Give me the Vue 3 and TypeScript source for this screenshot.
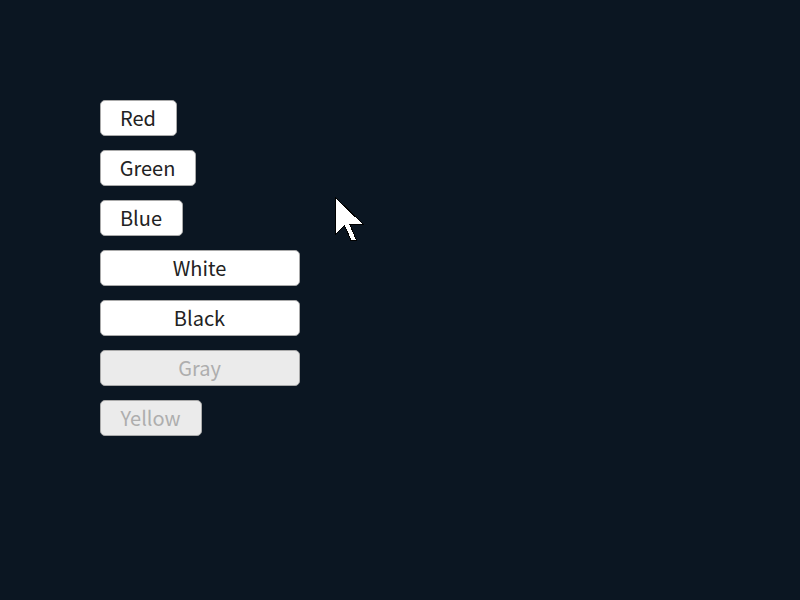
<script setup lang="ts">
interface Item { label: string; size: string; disabled: boolean }
const items: Item[] = [
  { label: 'Red', size: 'red', disabled: false },
  { label: 'Green', size: 'green', disabled: false },
  { label: 'Blue', size: 'blue', disabled: false },
  { label: 'White', size: 'wide', disabled: false },
  { label: 'Black', size: 'wide', disabled: false },
  { label: 'Gray', size: 'wide', disabled: true },
  { label: 'Yellow', size: 'yellow', disabled: true },
]
</script>

<template>
  <main class="screen">
    <button v-for="item in items" :key="item.label" class="button" :class="item.size" :disabled="item.disabled">{{ item.label }}</button>
    <svg class="cursor" viewBox="0 0 34 50" aria-hidden="true">
      <path d="M3.5 3.5V40.5L12.5 31.5L19 46.5H24.5L18 30.5H31.5Z" fill="#fff" stroke="#000" shape-rendering="crispEdges" />
    </svg>
  </main>
</template>

<style>
body { margin: 0; background: #0b1622; }
</style>
<style scoped>
.screen { position: relative; box-sizing: border-box; width: 800px; height: 600px; padding: 100px; display: flex; flex-direction: column; align-items: flex-start; gap: 14px; background: #0b1622; overflow: hidden; }
.button { box-sizing: border-box; height: 36px; flex: none; padding: 0 1px 0 0; border: 1px solid #aaa; border-radius: 5px; background: #fff; color: #222; font: 20px/34px "Noto Sans CJK SC", sans-serif; text-align: center; }
.button:disabled { background: #ebebeb; color: #aeaeae; }
.red { width: 77px; }
.green { width: 96px; }
.blue { width: 83px; }
.wide { width: 200px; }
.yellow { width: 102px; }
.cursor { position: absolute; left: 332px; top: 194px; width: 34px; height: 50px; }
</style>
